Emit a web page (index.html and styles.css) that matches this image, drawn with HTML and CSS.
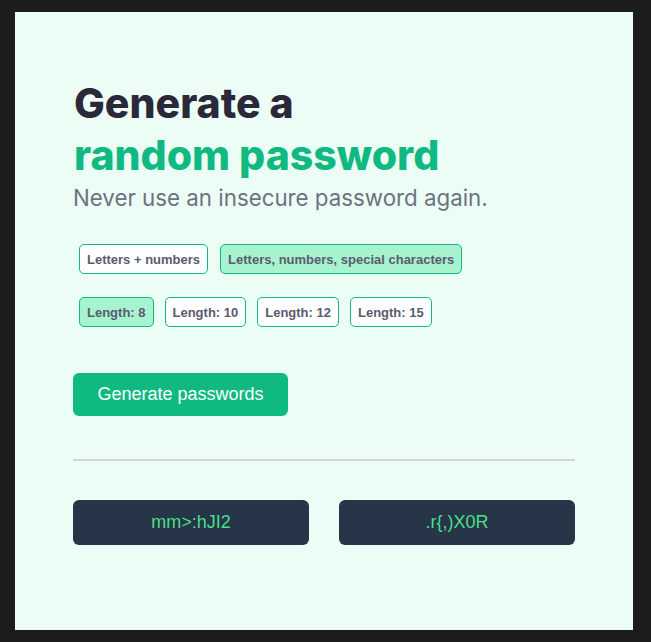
FILE: index.html
```html
<!DOCTYPE html>
<html lang="en">
<head>
<meta charset="utf-8">
<title>Password generator</title>
<link rel="stylesheet" href="styles.css">
</head>
<body>
<main class="card">
  <h1 class="title">Generate a<br><span class="accent">random password</span></h1>
  <p class="subtitle">Never use an insecure password again.</p>
  <div class="options">
    <button class="pill">Letters + numbers</button>
    <button class="pill active">Letters, numbers, special characters</button>
  </div>
  <div class="options lengths">
    <button class="pill active">Length: 8</button>
    <button class="pill">Length: 10</button>
    <button class="pill">Length: 12</button>
    <button class="pill">Length: 15</button>
  </div>
  <button class="generate">Generate passwords</button>
  <hr class="divider">
  <div class="results">
    <div class="password">mm&gt;:hJI2</div>
    <div class="password">.r{,)X0R</div>
  </div>
</main>
</body>
</html>
```
FILE: styles.css
```css
html, body {
  margin: 0;
  padding: 0;
  background: #1c1c1c;
}
body {
  padding: 12px 18px 12px 15px;
}
.card {
  box-sizing: border-box;
  width: 618px;
  height: 618px;
  background: #ecfdf5;
  padding: 65px 58px 0 58px;
  font-family: "Liberation Sans", Arial, sans-serif;
}
.title {
  margin: 0 0 0 1px;
  font-family: Inter, sans-serif;
  font-weight: 800;
  font-size: 41px;
  line-height: 52px;
  letter-spacing: 0;
  color: #2b283a;
}
.accent {
  color: #10b981;
}
.subtitle {
  margin: 3px 0 0 0;
  font-family: Inter, sans-serif;
  font-size: 22.3px;
  line-height: 28px;
  color: #6b7280;
}
.options {
  display: flex;
  gap: 12px;
  padding: 0 6px;
  margin-top: 32px;
}
.options.lengths {
  gap: 11px;
  margin-top: 23px;
}
.pill {
  box-sizing: border-box;
  height: 30px;
  padding: 0 7px;
  border: 1px solid #10b981;
  border-radius: 5px;
  background: #ffffff;
  font-family: "Liberation Sans", Arial, sans-serif;
  font-weight: 700;
  font-size: 13px;
  color: #5a5b6e;
}
.pill.active {
  background: #a7f3d0;
}
.generate {
  display: block;
  margin-top: 46px;
  width: 215px;
  height: 43px;
  border: none;
  border-radius: 6px;
  background: #10b981;
  color: #ffffff;
  font-family: "Liberation Sans", Arial, sans-serif;
  font-size: 18px;
}
.divider {
  margin: 43px 0 0 0;
  border: none;
  height: 2px;
  background: #d4d4d4;
}
.results {
  display: flex;
  gap: 30px;
  margin-top: 39px;
}
.password {
  flex: 1;
  height: 45px;
  display: flex;
  align-items: center;
  justify-content: center;
  border-radius: 6px;
  background: #273549;
  color: #4adf86;
  font-size: 18px;
}
```
